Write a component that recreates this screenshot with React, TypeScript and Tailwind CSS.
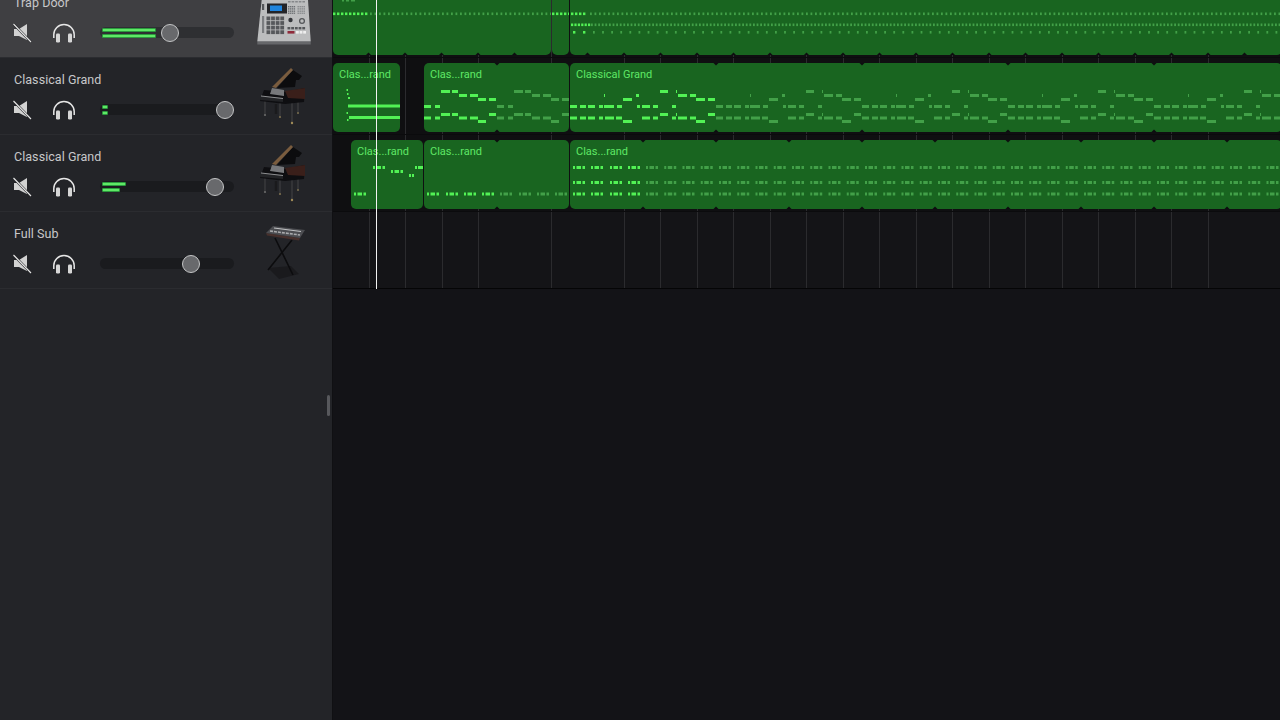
type Note = [number, number, number];

const BRIGHT = '#52f255';
const GHOST = '#42a048';

// piano loop of the 73px region, [y, from, to] relative to the region start
const shortLoop: Note[] = [
  [90, 17, 26], [90, 28, 34],
  [94, 35, 43], [94, 46, 54],
  [98, 54, 62], [98, 65, 72],
  [105, 0, 7], [105, 11, 16],
  [113, 17, 26], [113, 28, 34], [113, 65, 72],
  [116.5, 0, 7], [116.5, 11, 16], [116.5, 35, 43], [116.5, 46, 54],
  [120, 54, 62],
];

// longer loop used by the "Classical Grand" region, 146px
const longLoop: Note[] = [
  [105, 0, 7], [105, 10, 16], [105, 18, 25], [105, 29, 33], [105, 34, 44], [105, 47, 52], [105, 67, 70],
  [105, 72, 80], [105, 83, 88], [105, 102, 106],
  [116.5, 0, 7], [116.5, 10, 16], [116.5, 18, 25], [116.5, 29, 33], [116.5, 35, 44], [116.5, 46, 52],
  [116.5, 72, 80], [116.5, 83, 88], [116.5, 102, 106], [116.5, 108, 117], [116.5, 120, 126],
  [98, 53, 62], [98, 126, 135], [98, 138, 145],
  [94, 34, 35], [94, 66, 69], [94, 108, 117], [94, 120, 126],
  [90, 90, 98], [90, 106, 107],
  [113, 90, 98], [113, 106, 107], [113, 138, 145],
  [120, 53, 62], [120, 126, 135],
];

function shifted(notes: Note[], by: number): Note[] {
  return notes.map(([y, a, b]) => [y, a + by, b + by] as Note);
}

function group(y: number, at: number): Note[] {
  return [[y, at, at + 2], [y, at + 3.5, at + 8], [y, at + 9.5, at + 12]];
}

function range(from: number, to: number, step: number) {
  const out: number[] = [];
  for (let v = from; v < to; v += step) out.push(v);
  return out;
}

function Notes({ notes, color, h = 3 }: { notes: Note[]; color: string; h?: number }) {
  return (
    <>
      {notes.map(([y, a, b], i) => (
        <rect key={i} x={a} y={y} width={b - a} height={h} fill={color} />
      ))}
    </>
  );
}

function Notch({ x, top, bottom }: { x: number; top?: number; bottom?: number }) {
  return (
    <>
      {top !== undefined && <polygon points={`${x - 2.5},${top} ${x + 2.5},${top} ${x},${top + 2.5}`} fill="#0d0d0f" />}
      {bottom !== undefined && <polygon points={`${x - 2.5},${bottom} ${x + 2.5},${bottom} ${x},${bottom - 2.5}`} fill="#0d0d0f" />}
    </>
  );
}

function Region({
  x,
  top,
  w,
  title,
  className,
  children,
}: {
  x: number;
  top: number;
  w: number;
  title?: string;
  className: string;
  children?: React.ReactNode;
}) {
  return (
    <div className={`relative h-[69px] shrink-0 overflow-hidden rounded-[5px] bg-[#196520] ${className}`}>
      <svg className="absolute inset-0 h-full w-full" viewBox={`${x} ${top} ${w} 69`} preserveAspectRatio="none">
        {children}
      </svg>
      {title && (
        <span className="absolute left-[6px] top-[5px] whitespace-nowrap font-['Roboto',sans-serif] text-[11px] leading-[14px] text-[#5fe866]">
          {title}
        </span>
      )}
    </div>
  );
}

function MuteIcon() {
  return (
    <svg width="20" height="20" viewBox="0 0 20 20" className="shrink-0">
      <path d="M1 6H6L14 1V17L6 13H1Z" fill="#d2d2d2" />
      <path d="M0.5 1L18 19" stroke="#26272a" strokeWidth="2.4" />
      <path d="M0.5 1L18 19" stroke="#e8e8e8" strokeWidth="1.1" />
    </svg>
  );
}

function HeadphonesIcon() {
  return (
    <svg width="24" height="20" viewBox="0 0 24 20" className="shrink-0">
      <path d="M1.8 15V11.5a10.2 10 0 0 1 20.4 0V15" fill="none" stroke="#e6e6e6" strokeWidth="1.5" />
      <rect x="4" y="10.5" width="4" height="9" rx="1.2" fill="#d6d6d6" />
      <rect x="16" y="10.5" width="4" height="9" rx="1.2" fill="#d6d6d6" />
    </svg>
  );
}

function Fader({
  light,
  thumb,
  bars,
}: {
  light?: boolean;
  thumb: string;
  bars?: [string, string];
}) {
  return (
    <div className={`relative h-[11px] w-[134px] rounded-full ${light ? 'bg-[#2e2f32]' : 'bg-[#1a1b1e]'}`}>
      {bars && (
        <div className="absolute left-[2px] top-[1px] flex w-full flex-col gap-[1.5px]">
          <div className={`h-[4px] rounded-[1px] border-[0.5px] border-[#2c9a3e] bg-[#5fe866] ${bars[0]}`} />
          <div className={`h-[4px] rounded-[1px] border-[0.5px] border-[#2c9a3e] bg-[#5fe866] ${bars[1]}`} />
        </div>
      )}
      <div className={`absolute top-[-3.5px] h-[18px] w-[18px] rounded-full border border-[#c4c5c6] bg-[#68696c] ${thumb}`} />
    </div>
  );
}

function Sampler() {
  return (
    <svg viewBox="0 0 60 60" className="h-[60px] w-[60px] blur-[0.4px]">
      <polygon points="2.3,52 55.7,52 55.7,55.5 2.3,55.5" fill="#66676a" />
      <polygon points="6.7,10.7 53,10.7 55.7,52.3 2.3,52.3" fill="#bcbdbe" />
      <rect x="12" y="14.5" width="20" height="10" fill="#232428" />
      <rect x="15" y="16.5" width="12" height="5.5" fill="#1f84dd" />
      {range(0, 4, 1).flatMap((r) =>
        range(0, 4, 1).map((c) => (
          <rect key={`${r}${c}`} x={11.5 + c * 4.6} y={27.5 + r * 4.6} width="3.8" height="3.8" fill="#56585b" />
        )),
      )}
      {range(0, 5, 1).flatMap((r) =>
        range(0, 4, 1).map((c) => (
          <rect key={`a${r}${c}`} x={33 + c * 1.9} y={17 + r * 1.7} width="1.4" height="1.1" fill="#6d7074" />
        )),
      )}
      {range(0, 5, 1).flatMap((r) =>
        range(0, 4, 1).map((c) => (
          <rect key={`b${r}${c}`} x={42.5 + c * 2} y={17 + r * 1.7} width="1.4" height="1.1" fill="#85878a" />
        )),
      )}
      {range(0, 5, 1).map((c) => (
        <rect key={c} x={33 + c * 3.6} y="12" width="2.6" height="1.5" fill="#85878a" />
      ))}
      <rect x="7" y="15" width="2.2" height="6" fill="#55575a" />
      <rect x="7" y="27" width="2.2" height="17" fill="#7c7e81" />
      <circle cx="35.5" cy="31" r="2.2" fill="#34363a" />
      <circle cx="47" cy="32" r="2.4" fill="none" stroke="#55575a" strokeWidth="1.3" />
      <rect x="32.5" y="42" width="7" height="2.6" fill="#8f2a3a" />
      {range(0, 3, 1).map((c) => (
        <rect key={c} x={41 + c * 3.6} y="42" width="2.8" height="2.6" fill="#eeeeee" />
      ))}
      {range(0, 5, 1).map((c) => (
        <rect key={c} x={32.5 + c * 3.7} y="38" width="2.8" height="2.4" fill="#55575a" />
      ))}
    </svg>
  );
}

function Piano() {
  return (
    <svg viewBox="0 0 60 60" className="h-[60px] w-[60px] blur-[0.5px]">
      <path d="M10 35V48M25 35V50M37 35V56M43 35V46" stroke="#38383b" strokeWidth="1.6" />
      <path d="M21 38V48" stroke="#1a1a1c" strokeWidth="2.5" />
      <circle cx="10" cy="49" r="1.1" fill="#6b6b6b" />
      <circle cx="25" cy="51" r="1.1" fill="#7d7050" />
      <circle cx="37" cy="57" r="1.2" fill="#a08c58" />
      <circle cx="43" cy="47" r="1" fill="#7d7050" />
      <polygon points="38,4 47,10 44,14 41,14 40,21 22,22" fill="#0c0c0e" />
      <polygon points="36,2 38,4 21,22 17,21" fill="#7a5c3e" />
      <polygon points="9,24 30,26 50,22 49,36 30,38 5,35" fill="#0e0e11" />
      <polygon points="30,25 50,22 50,33 33,32" fill="#3a1f1a" />
      <polygon points="17,22 29,24 29,30 15,28" fill="#77787b" />
      <polygon points="6,30 28,32 28,36 5,34" fill="#222326" />
      <path d="M6 30L28 32.5" stroke="#9a9b9d" strokeWidth="0.9" />
    </svg>
  );
}

function KeyboardStand() {
  return (
    <svg viewBox="0 0 60 60" className="h-[60px] w-[60px] blur-[0.5px]">
      <polygon points="13,48 36,46 44,54 24,59" fill="#1a1a1d" />
      <path d="M20 18L38 55M37 20L13 50" stroke="#0c0c0e" strokeWidth="1.6" />
      <polygon points="11,13 45,18 44,20.5 12,15.5" fill="#47302c" />
      <polygon points="18,6 50,10 45,18 11,13" fill="#4c4d51" />
      <path d="M19 8L46 11.5" stroke="#bfc0c2" strokeWidth="1.2" />
      <path d="M15 11L45 15" stroke="#a9aaac" strokeWidth="1.6" strokeDasharray="3 1" />
    </svg>
  );
}

function Track({
  name,
  active,
  thumb,
  bars,
  icon,
}: {
  name: string;
  active?: boolean;
  thumb: string;
  bars?: [string, string];
  icon: React.ReactNode;
}) {
  return (
    <div
      className={`flex h-[77px] items-center border-b border-[#2b2c30] pl-[13px] pr-[17px] ${
        active ? 'bg-[#3f3f42]' : 'bg-[#232428]'
      }`}
    >
      <div className="mb-px flex flex-1 flex-col">
        <div className="pl-px font-['Roboto',sans-serif] text-[12.5px] leading-[16px] tracking-[0.05px] text-[#c8c8ca]">{name}</div>
        <div className="mt-[12px] flex items-center">
          <MuteIcon />
          <div className="ml-[19px]">
            <HeadphonesIcon />
          </div>
          <div className="ml-[24px]">
            <Fader light={active} thumb={thumb} bars={bars} />
          </div>
        </div>
      </div>
      <div className="shrink-0">{icon}</div>
    </div>
  );
}

const GROUPS_A = range(643, 1280, 18.25);

export default function App() {
  const beatNotches = range(368.5, 1280, 36.5);
  const shortRow3 = [427, 446, 464, 482];

  return (
    <div className="flex h-[720px] w-[1280px] overflow-hidden bg-[#131317]">
      <aside className="relative mt-[-19px] flex h-[739px] w-[332px] shrink-0 flex-col bg-[#232428]">
        <Track name="Trap Door" active thumb="left-[61px]" bars={['w-[54px]', 'w-[54px]']} icon={<Sampler />} />
        <Track name="Classical Grand" thumb="left-[116px]" bars={['w-[6px]', 'w-[6px]']} icon={<Piano />} />
        <Track name="Classical Grand" thumb="left-[106px]" bars={['w-[24px]', 'w-[18px]']} icon={<Piano />} />
        <Track name="Full Sub" thumb="left-[82px]" icon={<KeyboardStand />} />
        <div className="absolute left-[327px] top-[414px] h-[21px] w-[3px] rounded-full bg-[#57585c]" />
      </aside>
      <div className="w-px shrink-0 bg-[#101013]" />

      <main className="relative mt-[-19px] flex h-[739px] flex-1 flex-col overflow-hidden">
        <div className="flex h-[77px] shrink-0 gap-px border-b border-[#0b0b0d] bg-[#0f0f11] bg-[repeating-linear-gradient(90deg,transparent_0,transparent_35.5px,#2b2b2e_35.5px,#2b2b2e_36.5px)] pt-[5px]">
          <Region x={333} top={-14} w={218} className="w-[218px]">
            <Notes notes={[[0, 342, 344], [0, 346, 349], [0, 351, 355]]} color={GHOST} h={1.5} />
            <Notes notes={range(333, 366, 4).map((v) => [12.5, v, v + 2.4] as Note)} color={BRIGHT} h={2.6} />
            <Notes notes={range(370, 551, 4.5).map((v) => [12.5, v, v + 1.8] as Note)} color={GHOST} h={2.6} />
            {beatNotches.map((v) => (
              <Notch key={v} x={v} bottom={55} />
            ))}
          </Region>
          <Region x={552} top={-14} w={17} className="w-[17px]">
            <Notes notes={range(552, 569, 4).map((v) => [12.5, v, v + 2.4] as Note)} color={BRIGHT} h={2.6} />
          </Region>
          <Region x={570} top={-14} w={712} className="w-[712px]">
            <Notes notes={range(571, 586, 4).map((v) => [12.5, v, v + 2.4] as Note)} color={BRIGHT} h={2.6} />
            <Notes notes={range(590, 1280, 4.5).map((v) => [12.5, v, v + 1.8] as Note)} color={GHOST} h={2.6} />
            <Notes notes={range(571, 588, 3.4).map((v) => [23.5, v, v + 2.2] as Note)} color={BRIGHT} h={2.6} />
            <Notes notes={range(591, 1280, 3.6).map((v) => [23.5, v, v + 1.8] as Note)} color={GHOST} h={2.6} />
            <Notes notes={[[31, 573, 575.4], [31, 583, 585.4]]} color={BRIGHT} h={2.6} />
            <Notes notes={range(593, 1280, 9.1).map((v) => [31, v, v + 1.8] as Note)} color={GHOST} h={2.6} />
            {beatNotches.map((v) => (
              <Notch key={v} x={v} bottom={55} />
            ))}
          </Region>
        </div>

        <div className="flex h-[77px] shrink-0 border-b border-[#0b0b0d] bg-[#0f0f11] bg-[repeating-linear-gradient(90deg,transparent_0,transparent_35.5px,#2b2b2e_35.5px,#2b2b2e_36.5px)] pt-[5px]">
          <Region x={333} top={63} w={67} title="Clas...rand" className="w-[67px]">
            <Notes notes={[[104.5, 348, 400], [116, 349, 400]]} color={BRIGHT} />
            <Notes notes={[[89, 346.5, 348], [93, 347, 348.5], [97, 348, 350], [112, 346.5, 348], [119, 347, 348.5]]} color={BRIGHT} h={2} />
          </Region>
          <Region x={424} top={63} w={145} title="Clas...rand" className="ml-[24px] w-[145px]">
            <Notes notes={shifted(shortLoop, 424)} color={BRIGHT} />
            <Notes notes={shifted(shortLoop, 497)} color={GHOST} />
            <Notch x={497} top={63} bottom={132} />
          </Region>
          <Region x={570} top={63} w={712} title="Classical Grand" className="ml-px w-[712px]">
            <Notes notes={shifted(longLoop, 570)} color={BRIGHT} />
            <Notes notes={shifted(longLoop, 716)} color={GHOST} />
            <Notes notes={shifted(longLoop, 862)} color={GHOST} />
            <Notes notes={shifted(longLoop, 1008)} color={GHOST} />
            <Notes notes={shifted(longLoop, 1154)} color={GHOST} />
            {[716, 862, 1008, 1154].map((v) => (
              <Notch key={v} x={v} top={63} bottom={132} />
            ))}
          </Region>
        </div>

        <div className="flex h-[77px] shrink-0 border-b border-[#0b0b0d] bg-[#0f0f11] bg-[repeating-linear-gradient(90deg,transparent_0,transparent_35.5px,#2b2b2e_35.5px,#2b2b2e_36.5px)] pt-[5px]">
          <Region x={351} top={140} w={72} title="Clas...rand" className="ml-[18px] w-[72px]">
            <Notes
              notes={[...group(166, 373), ...group(170, 391), [174, 409, 411], [174, 412, 414], [166, 415, 417], [166, 418, 423], ...group(192.5, 354)]}
              color={BRIGHT}
            />
          </Region>
          <Region x={424} top={140} w={145} title="Clas...rand" className="ml-px w-[145px]">
            <Notes notes={shortRow3.flatMap((v) => group(192.5, v))} color={BRIGHT} />
            <Notes notes={shortRow3.flatMap((v) => group(192.5, v + 73))} color={GHOST} />
            <Notch x={497} top={140} bottom={209} />
          </Region>
          <Region x={570} top={140} w={712} title="Clas...rand" className="ml-px w-[712px]">
            {[166, 181, 192.5].map((y) => (
              <g key={y}>
                <Notes notes={[573, 591, 610, 628].flatMap((v) => group(y, v))} color={BRIGHT} />
                <Notes notes={GROUPS_A.flatMap((v) => group(y, v + 3))} color={GHOST} />
              </g>
            ))}
            {range(643, 1280, 73).map((v) => (
              <Notch key={v} x={v} top={140} bottom={209} />
            ))}
          </Region>
        </div>

        <div className="h-[77px] shrink-0 border-b border-[#050506] bg-[#141417] bg-[repeating-linear-gradient(90deg,transparent_0,transparent_35.5px,#2b2b2e_35.5px,#2b2b2e_36.5px)]" />
        <div className="flex-1 bg-[#131317]" />

        <div className="absolute left-[43px] top-0 h-[308px] w-px bg-[#f2f2f2]" />
      </main>
    </div>
  );
}
